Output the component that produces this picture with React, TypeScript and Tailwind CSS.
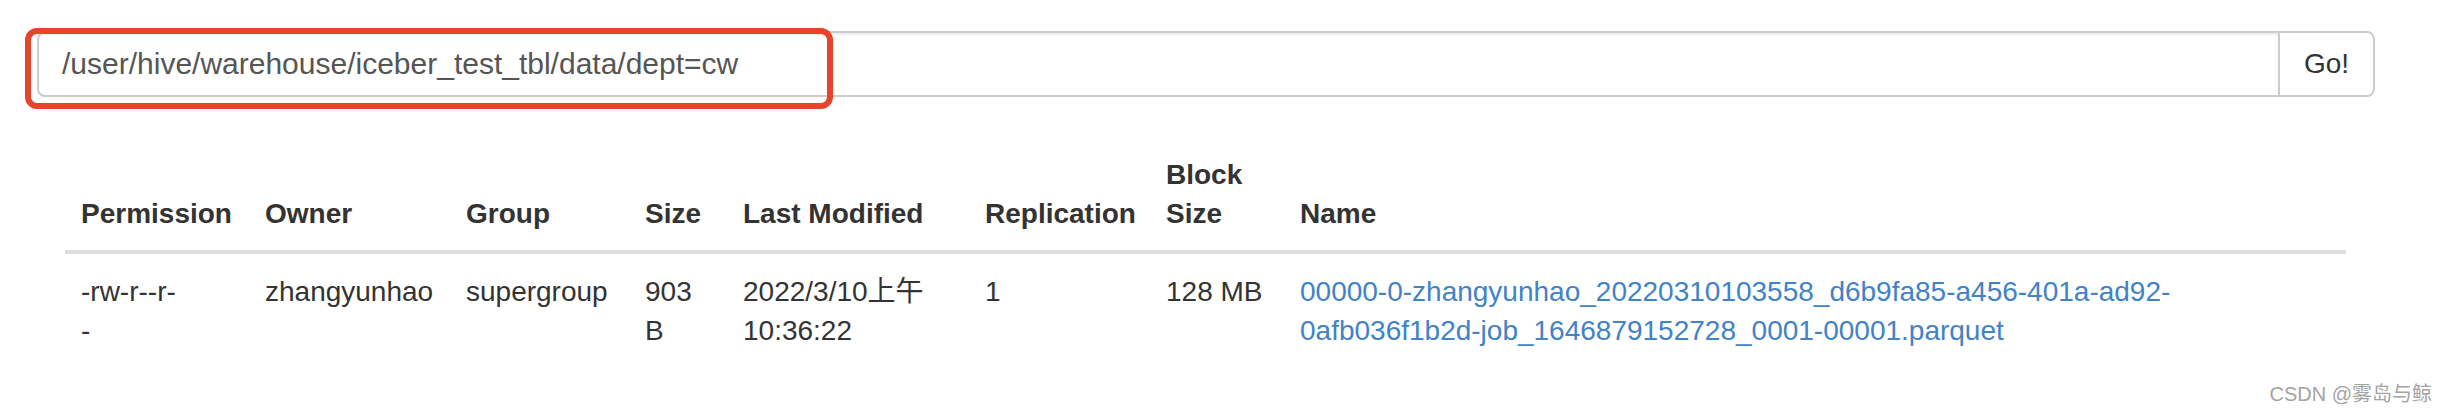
const font = { fontFamily: '"Liberation Sans", Arial, "Noto Sans CJK SC", sans-serif' };

type Row = {
  permission: React.ReactNode;
  owner: string;
  group: string;
  size: string;
  modified: string;
  replication: string;
  blockSize: string;
  name: string[];
};

const rows: Row[] = [
  {
    permission: (
      <>
        -rw-r--r-
        <br />-
      </>
    ),
    owner: "zhangyunhao",
    group: "supergroup",
    size: "903 B",
    modified: "2022/3/10上午 10:36:22",
    replication: "1",
    blockSize: "128 MB",
    name: [
      "00000-0-zhangyunhao_20220310103558_d6b9fa85-a456-401a-ad92-",
      "0afb036f1b2d-job_1646879152728_0001-00001.parquet",
    ],
  },
];

const columns = [
  { label: "Permission", w: "w-[184px]" },
  { label: "Owner", w: "w-[201px]" },
  { label: "Group", w: "w-[179px]" },
  { label: "Size", w: "w-[98px]" },
  { label: "Last Modified", w: "w-[242px]" },
  { label: "Replication", w: "w-[181px]" },
  { label: "Block Size", w: "w-[134px]" },
  { label: "Name", w: "" },
];

export default function App() {
  return (
    <div className="relative h-[414px] w-[2444px] overflow-hidden bg-white text-[#333]" style={font}>
      {/* path search bar */}
      <div className="pl-[37px] pt-[31px]">
        <div className="flex h-[66px] w-[2338px]">
          <input
            readOnly
            value="/user/hive/warehouse/iceber_test_tbl/data/dept=cw"
            className="h-full flex-1 rounded-l-[8px] border-2 border-[#ccc] px-[23px] text-[30px] text-[#555] shadow-[inset_0_2px_2px_rgba(0,0,0,0.075)] outline-none"
            style={font}
          />
          <button
            className="-ml-[2px] h-full w-[97px] rounded-r-[8px] border-2 border-[#ccc] bg-white text-[28px] text-[#333]"
            style={font}
          >
            Go!
          </button>
        </div>
      </div>

      {/* highlight marker drawn around the path field */}
      <div className="pointer-events-none absolute left-[25px] top-[28px] h-[81px] w-[808px] rounded-[12px] border-[6px] border-[#e8432b]" />

      {/* directory listing */}
      <div className="ml-[65px] mt-[42px] w-[2281px]">
        <table className="w-full table-fixed border-collapse text-left text-[28px] leading-[39px]">
          <colgroup>
            {columns.map((c) => (
              <col key={c.label} className={c.w} />
            ))}
          </colgroup>
          <thead>
            <tr className="border-b-4 border-[#ddd]">
              {columns.map((c) => (
                <th key={c.label} className="px-[16px] pb-[17px] pt-[16px] align-bottom font-bold">
                  {c.label}
                </th>
              ))}
            </tr>
          </thead>
          <tbody>
            {rows.map((r, i) => (
              <tr key={i}>
                <td className="px-[16px] pb-[16px] pt-[18px] align-top">{r.permission}</td>
                <td className="px-[16px] pb-[16px] pt-[18px] align-top">{r.owner}</td>
                <td className="px-[16px] pb-[16px] pt-[18px] align-top">{r.group}</td>
                <td className="px-[16px] pb-[16px] pt-[18px] align-top">{r.size}</td>
                <td className="px-[16px] pb-[16px] pt-[18px] align-top">{r.modified}</td>
                <td className="px-[16px] pb-[16px] pt-[18px] align-top">{r.replication}</td>
                <td className="px-[16px] pb-[16px] pt-[18px] align-top">{r.blockSize}</td>
                <td className="px-[16px] pb-[16px] pt-[18px] align-top">
                  <a href="#" className="text-[#4282c6]">
                    {r.name[0]}
                    <br />
                    {r.name[1]}
                  </a>
                </td>
              </tr>
            ))}
          </tbody>
        </table>
      </div>

      {/* watermark */}
      <div className="absolute right-[12px] top-[382px] text-[20px] leading-[24px] text-[#a3a3a3]">
        CSDN @雾岛与鲸
      </div>
    </div>
  );
}
